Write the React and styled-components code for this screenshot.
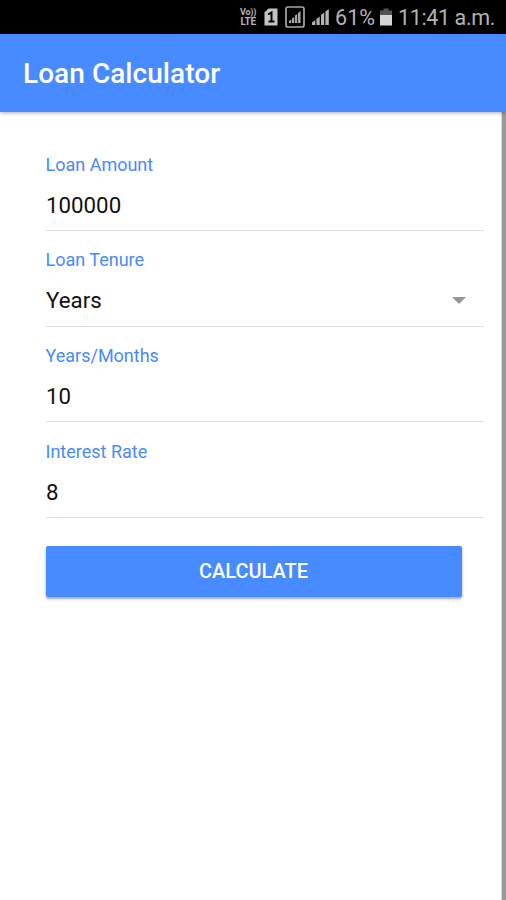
import React from "react";
import styled, { createGlobalStyle } from "styled-components";

const GlobalStyle = createGlobalStyle`
  * {
    box-sizing: border-box;
  }
  body {
    margin: 0;
    background: #ffffff;
    font-family: Roboto, "Liberation Sans", sans-serif;
  }
`;

const Screen = styled.div`
  display: flex;
  flex-direction: column;
  height: 900px;
  overflow: hidden;
`;

const StatusBar = styled.div`
  display: flex;
  justify-content: flex-end;
  align-items: center;
  height: 34px;
  padding-right: 11px;
  background: #000000;
  color: #b4b4b4;
`;

const StatusIcon = styled.svg`
  display: block;
  flex: none;
  margin-right: ${(props) => props.$gap}px;
`;

const Network = styled.div`
  width: 18px;
  margin-right: 7px;
  font-weight: 700;
  line-height: 9px;
  text-align: center;
  white-space: nowrap;
`;

const NetworkLine = styled.div`
  font-size: ${(props) => props.$size}px;
  letter-spacing: ${(props) => props.$spacing}px;
`;

const StatusText = styled.span`
  padding-top: 1px;
  font-size: 21.5px;
  line-height: 33px;
  letter-spacing: ${(props) => props.$spacing}px;
  margin-right: ${(props) => props.$gap || 0}px;
  white-space: nowrap;
`;

const Header = styled.header`
  display: flex;
  align-items: center;
  flex: none;
  height: 78px;
  padding: 2px 23px 0;
  background: #488aff;
  box-shadow: 0 1px 4px rgba(0, 0, 0, 0.32);
  z-index: 1;
`;

const Title = styled.h1`
  margin: 0;
  color: #ffffff;
  font-size: 28px;
  font-weight: 500;
  line-height: 36px;
  letter-spacing: 0.05px;
`;

const Content = styled.main`
  flex: 1;
  padding: 23px 18px 0 46px;
  border-right: 4px solid #999999;
  box-shadow: inset -1px 0 0 #d8d8d8;
`;

const Field = styled.div`
  height: 95.75px;
  padding-top: 18.6px;
  border-bottom: 1px solid #dcdcdc;
`;

const Label = styled.div`
  margin-left: -0.5px;
  color: #488aff;
  font-size: 18px;
  line-height: 22px;
`;

const Value = styled.div`
  display: flex;
  align-items: center;
  justify-content: space-between;
  margin-top: 15px;
  padding-right: 18px;
  color: #111111;
  font-size: 22.3px;
  line-height: 28px;
`;

const Arrow = styled.span`
  border: 7px solid transparent;
  border-top-color: #969696;
  border-bottom: 0;
`;

const Button = styled.button`
  display: block;
  width: 416px;
  height: 51px;
  margin-top: 28px;
  padding: 0 1px 2px 0;
  border: 0;
  border-radius: 2px;
  background: #488aff;
  box-shadow: 0 2px 3px rgba(0, 0, 0, 0.36);
  color: #ffffff;
  font-family: inherit;
  font-size: 20px;
  font-weight: 500;
  text-transform: uppercase;
`;

const fields = [
  { label: "Loan Amount", value: "100000" },
  { label: "Loan Tenure", value: "Years", select: true },
  { label: "Years/Months", value: "10" },
  { label: "Interest Rate", value: "8" },
];

class App extends React.Component {
  render() {
    return (
      <Screen>
        <GlobalStyle />
        <StatusBar>
          <Network>
            <NetworkLine $size={9} $spacing={-0.2}>Vo))</NetworkLine>
            <NetworkLine $size={10} $spacing={-0.3}>LTE</NetworkLine>
          </Network>
          <StatusIcon $gap={7} width="14" height="18" viewBox="0 0 14 18">
            <path d="M4.5 0.5H13.5V17.5H0.5V4.5Z" fill="#c4c4c4" />
            <path d="M4 6.5L7.5 4.5V13M4.5 13.5H10.5" fill="none" stroke="#000" strokeWidth="2" />
          </StatusIcon>
          <StatusIcon $gap={7} width="20" height="22" viewBox="0 0 20 22">
            <rect x="1" y="1" width="18" height="20" rx="2" fill="none" stroke="#a8a8a8" strokeWidth="1.7" />
            <path d="M4 17V15L6.3 13.5V17ZM7 17V12.5L9.2 11V17ZM10 17V9.5L12.2 8V17ZM13 17V7L15.5 5V17Z" fill="#a8a8a8" />
          </StatusIcon>
          <StatusIcon $gap={6} width="17" height="18" viewBox="0 0 17 18">
            <path d="M0 17V14.5L3.3 12V17ZM4.5 17V11L7.7 8.5V17ZM9 17V7L12.2 4.5V17ZM13.4 17V3.5L16.8 1V17Z" fill="#b4b4b4" />
          </StatusIcon>
          <StatusText $spacing={0} $gap={5}>61%</StatusText>
          <StatusIcon $gap={6} width="12" height="18" viewBox="0 0 12 18">
            <path d="M3.5 0.5H8.5V2.5H12V8H0V2.5H3.5Z" fill="#555555" />
            <path d="M0 7H12V17.5H0Z" fill="#d6d6d6" />
          </StatusIcon>
          <StatusText $spacing={-0.38}>11:41 a.m.</StatusText>
        </StatusBar>
        <Header>
          <Title>Loan Calculator</Title>
        </Header>
        <Content>
          {fields.map((field) => {
            return (
              <Field key={field.label}>
                <Label>{field.label}</Label>
                <Value>
                  {field.value}
                  {field.select && <Arrow />}
                </Value>
              </Field>
            );
          })}
          <Button type="button">Calculate</Button>
        </Content>
      </Screen>
    );
  }
}

export default App;
